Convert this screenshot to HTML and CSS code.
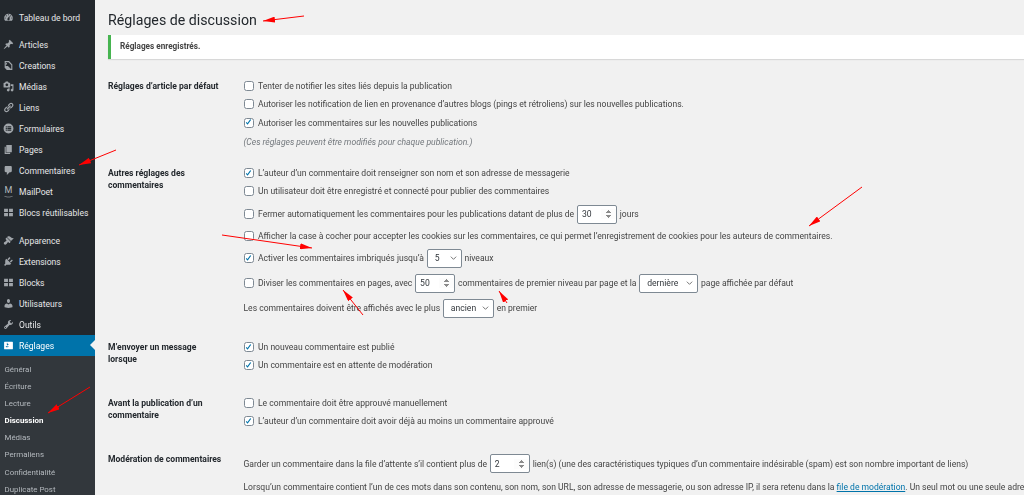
FILE: index.html
```html
<!doctype html>
<html lang="fr">
	<head>
		<title>Réglages de discussion</title>
		<meta charset="UTF-8">
		<link rel="stylesheet" href="styles.css">
	</head>

	<body>
		<svg class="defs" width="0" height="0">
			<defs>
				<symbol id="check" viewBox="0 0 20 20"><path d="M4 10.5l4 4.5 8-11-2.2-1.3-6 8.4-2.3-2.3z"/></symbol>
				<marker id="head" viewBox="0 0 12 6" refX="12" refY="3" markerWidth="12" markerHeight="6" markerUnits="userSpaceOnUse" orient="auto">
					<path d="M0 0L12 3L0 6z"/>
				</marker>
			</defs>
		</svg>

		<div class="wrapper">
			<nav class="sidebar">
				<ul class="menu">
					<li class="item"><svg class="icon" viewBox="0 0 20 20"><path d="M3.76 16h12.48c1.1-1.37 1.76-3.11 1.76-5 0-4.42-3.58-8-8-8s-8 3.58-8 8c0 1.89.66 3.63 1.76 5zM10 4c.55 0 1 .45 1 1s-.45 1-1 1-1-.45-1-1 .45-1 1-1zM6 6c.55 0 1 .45 1 1s-.45 1-1 1-1-.45-1-1 .45-1 1-1zm8 0c.55 0 1 .45 1 1s-.45 1-1 1-1-.45-1-1 .45-1 1-1zm-5.37 5.55L12 7v6c0 1.1-.9 2-2 2s-2-.9-2-2c0-.57.24-1.08.63-1.45zM4 10c.55 0 1 .45 1 1s-.45 1-1 1-1-.45-1-1 .45-1 1-1zm12 0c.55 0 1 .45 1 1s-.45 1-1 1-1-.45-1-1 .45-1 1-1z" fill-rule="evenodd"/></svg>Tableau de bord</li>
					<li class="item sep"><svg class="icon" viewBox="0 0 20 20"><path d="M10.44 3.02l1.82-1.82 6.36 6.35-1.83 1.82c-1.05-.68-2.48-.57-3.41.36l-.75.75c-.92.93-1.04 2.35-.35 3.41l-1.83 1.82-2.41-2.41-2.8 2.79c-.42.42-3.38 2.71-3.8 2.29s1.86-3.39 2.28-3.81l2.79-2.79L4.1 9.36l1.83-1.82c1.05.69 2.48.57 3.4-.36l.75-.75c.93-.92 1.05-2.35.36-3.41z"/></svg>Articles</li>
					<li class="item"><svg class="icon" viewBox="0 0 20 20"><path d="M3 2h8l6 6v10H7l-4-4zm2 2v7h4l5 5h1V9l-5-5zm1 1.5a1.5 1.5 0 1 1 0 3 1.5 1.5 0 0 1 0-3z" fill-rule="evenodd"/></svg>Creations</li>
					<li class="item"><svg class="icon" viewBox="0 0 20 20"><path d="M13 11V4c0-.55-.45-1-1-1h-1.67L9 1H5L3.67 3H2c-.55 0-1 .45-1 1v7c0 .55.45 1 1 1h10c.55 0 1-.45 1-1zM7 4.5c1.38 0 2.5 1.12 2.5 2.5S8.38 9.5 7 9.5 4.5 8.38 4.5 7 5.62 4.5 7 4.5zM14 6h5v10.5c0 1.38-1.12 2.5-2.5 2.5S14 17.88 14 16.5s1.12-2.5 2.5-2.5c.17 0 .34.02.5.05V9h-3V6zm-4 8.05V13h2v3.5c0 1.38-1.12 2.5-2.5 2.5S7 17.88 7 16.5 8.12 14 9.5 14c.17 0 .34.02.5.05z"/></svg>Médias</li>
					<li class="item"><svg class="icon" viewBox="0 0 20 20"><path d="M17.74 2.76c1.68 1.69 1.68 4.41 0 6.1l-1.53 1.52c-1.12 1.12-2.7 1.47-4.14 1.09l2.62-2.61.76-.77.76-.76c.84-.84.84-2.2 0-3.04-.84-.85-2.2-.85-3.04 0l-.77.76-3.38 3.38c-.37-1.44-.02-3.02 1.1-4.14l1.52-1.53c1.69-1.68 4.42-1.68 6.1 0zM8.59 13.43l5.34-5.34c.42-.42.42-1.1 0-1.52-.44-.43-1.13-.39-1.53 0l-5.33 5.34c-.42.42-.42 1.1 0 1.52.44.43 1.13.39 1.52 0zm-.76 2.29l4.14-4.15c.38 1.44.03 3.02-1.09 4.14l-1.52 1.53c-1.69 1.68-4.41 1.68-6.1 0-1.68-1.68-1.68-4.42 0-6.1l1.53-1.52c1.12-1.12 2.7-1.47 4.14-1.1l-4.14 4.15c-.85.84-.85 2.2 0 3.05.84.84 2.2.84 3.04 0z"/></svg>Liens</li>
					<li class="item"><svg class="icon" viewBox="0 0 20 20"><path d="M10 1a9 9 0 1 1 0 18 9 9 0 0 1 0-18zM5 6v2h2V6zm3 0v2h7V6zM5 9v2h2V9zm3 0v2h7V9zm-3 3v2h2v-2zm3 0v2h7v-2z" fill-rule="evenodd"/></svg>Formulaires</li>
					<li class="item"><svg class="icon" viewBox="0 0 20 20"><path d="M6 15V2h10v13H6zm-1 1h8v2H3V5h2v11z"/></svg>Pages</li>
					<li class="item"><svg class="icon" viewBox="0 0 20 20"><path d="M5 2h9c1.1 0 2 .9 2 2v7c0 1.1-.9 2-2 2h-2l-5 5v-5H5c-1.1 0-2-.9-2-2V4c0-1.1.9-2 2-2z"/></svg>Commentaires</li>
					<li class="item"><span class="logo-m">M<svg viewBox="0 0 14 3"><path d="M1 .5c3 1.6 9 1.6 12 0-2 2.6-10 2.6-12 0z"/></svg></span>MailPoet</li>
					<li class="item"><svg class="icon" viewBox="0 0 20 20"><path d="M2 3h7v6H2zm9 0h7v6h-7zM2 11h7v6H2zm9 0h7v6h-7z"/></svg>Blocs réutilisables</li>
					<li class="item sep2"><svg class="icon" viewBox="0 0 20 20"><path d="M14.48 11.06L7.41 3.99l1.5-1.5c.5-.56 2.3-.47 3.51.32 1.21.8 1.43 1.28 2.91 2.1 1.18.64 2.45 1.26 4.45.85zm-.71.71L6.7 4.7 4.93 6.47c-.39.39-.39 1.02 0 1.41l1.06 1.06c.39.39.39 1.03 0 1.42-.6.6-1.43 1.11-2.21 1.69-.35.26-.7.53-1.01.84C1.43 13.71.96 15.65 2.15 16.85s3.14.72 4.17-.32c.31-.31.58-.66.84-1.01.58-.78 1.09-1.61 1.69-2.21.39-.39 1.02-.39 1.41 0l1.06 1.06c.39.39 1.02.39 1.41 0z"/></svg>Apparence</li>
					<li class="item"><svg class="icon" viewBox="0 0 20 20"><path d="M13.11 4.36L9.87 7.6 8 5.73l3.24-3.24c.35-.34 1.05-.2 1.56.32.52.51.66 1.21.31 1.55zm-8 1.77l.91-1.12 9.01 9.01-1.19.84c-.71.71-2.63 1.16-3.82 1.16H6.14L4.9 17.26c-.59.59-1.54.59-2.12 0-.59-.58-.59-1.53 0-2.12l1.24-1.24v-3.88c0-1.13.4-3.19 1.09-3.89zm7.26 3.97l3.24-3.24c.34-.35 1.04-.21 1.55.31.52.51.66 1.21.31 1.55l-3.24 3.25z"/></svg>Extensions</li>
					<li class="item"><svg class="icon" viewBox="0 0 20 20"><path d="M2 3h7v6H2zm9 0h7v6h-7zM2 11h7v6H2zm9 0h7v6h-7z"/></svg>Blocks</li>
					<li class="item"><svg class="icon" viewBox="0 0 20 20"><path d="M10 9.25c-2.27 0-2.73-3.44-2.73-3.44C7 4.02 7.82 2 9.97 2c2.16 0 2.98 2.02 2.71 3.81 0 0-.41 3.44-2.68 3.44zm0 2.57L12.72 10c2.39 0 4.52 2.33 4.52 4.53v2.49s-3.65 1.13-7.24 1.13c-3.65 0-7.24-1.13-7.24-1.13v-2.49c0-2.25 1.94-4.48 4.47-4.48z"/></svg>Utilisateurs</li>
					<li class="item"><svg class="icon" viewBox="0 0 20 20"><path d="M16.68 9.77c-1.34 1.34-3.3 1.67-4.95.99l-5.41 6.52c-.99.99-2.59.99-3.58 0s-.99-2.59 0-3.57l6.52-5.42c-.68-1.65-.35-3.61.99-4.95 1.28-1.28 3.12-1.62 4.72-1.06l-2.89 2.89 2.82 2.82 2.86-2.87c.53 1.58.18 3.39-1.08 4.65zM3.81 16.21c.4.39 1.04.39 1.43 0 .4-.4.4-1.04 0-1.43-.39-.4-1.03-.4-1.43 0-.39.39-.39 1.03 0 1.43z"/></svg>Outils</li>
					<li class="item active"><svg class="icon" viewBox="0 0 20 20"><path d="M18 16V4c0-.55-.45-1-1-1H3c-.55 0-1 .45-1 1v12c0 .55.45 1 1 1h14c.55 0 1-.45 1-1zM8 11h1c.55 0 1 .45 1 1s-.45 1-1 1H8v1.5c0 .28-.22.5-.5.5s-.5-.22-.5-.5V13H6c-.55 0-1-.45-1-1s.45-1 1-1h1V5.5c0-.28.22-.5.5-.5s.5.22.5.5V7h1c.55 0 1 .45 1 1s-.45 1-1 1h-1v5.5c0 .28-.22.5-.5.5s-.5-.22-.5-.5V9z" fill-rule="evenodd"/></svg>Réglages</li>
				</ul>
				<ul class="submenu">
					<li>Général</li>
					<li>Écriture</li>
					<li>Lecture</li>
					<li class="current">Discussion</li>
					<li>Médias</li>
					<li>Permaliens</li>
					<li>Confidentialité</li>
					<li>Duplicate Post</li>
				</ul>
			</nav>

			<main class="content">
				<h1>Réglages de discussion</h1>
				<div class="notice">Réglages enregistrés.</div>

				<section class="row row-first">
					<h2>Réglages d’article par défaut</h2>
					<div class="fields">
						<label class="line"><span class="box"></span>Tenter de notifier les sites liés depuis la publication</label>
						<label class="line"><span class="box"></span>Autoriser les notification de lien en provenance d’autres blogs (pings et rétroliens) sur les nouvelles publications.</label>
						<label class="line"><span class="box"><svg viewBox="0 0 20 20"><use href="#check"/></svg></span>Autoriser les commentaires sur les nouvelles publications</label>
						<p class="line note">(Ces réglages peuvent être modifiés pour chaque publication.)</p>
					</div>
				</section>

				<section class="row row-others">
					<h2>Autres réglages des commentaires</h2>
					<div class="fields">
						<label class="line"><span class="box"><svg viewBox="0 0 20 20"><use href="#check"/></svg></span>L’auteur d’un commentaire doit renseigner son nom et son adresse de messagerie</label>
						<label class="line"><span class="box"></span>Un utilisateur doit être enregistré et connecté pour publier des commentaires</label>
						<label class="line gap5"><span class="box"></span>Fermer automatiquement les commentaires pour les publications datant de plus de <input class="num" type="number" value="30"> jours</label>
						<label class="line gap4"><span class="box"></span>Afficher la case à cocher pour accepter les cookies sur les commentaires, ce qui permet l’enregistrement de cookies pour les auteurs de commentaires.</label>
						<label class="line gap4"><span class="box"><svg viewBox="0 0 20 20"><use href="#check"/></svg></span>Activer les commentaires imbriqués jusqu’à <select class="sel sel-small"><option>5</option></select> niveaux</label>
						<label class="line gap7"><span class="box"></span>Diviser les commentaires en pages, avec <input class="num" type="number" value="50"> commentaires de premier niveau par page et la <select class="sel sel-wide"><option>dernière</option></select> page affichée par défaut</label>
						<label class="line gap7">Les commentaires doivent être affichés avec le plus <select class="sel sel-mid"><option>ancien</option></select> en premier</label>
					</div>
				</section>

				<section class="row row-mail">
					<h2>M’envoyer un message lorsque</h2>
					<div class="fields">
						<label class="line"><span class="box"><svg viewBox="0 0 20 20"><use href="#check"/></svg></span>Un nouveau commentaire est publié</label>
						<label class="line"><span class="box"><svg viewBox="0 0 20 20"><use href="#check"/></svg></span>Un commentaire est en attente de modération</label>
					</div>
				</section>

				<section class="row row-before">
					<h2>Avant la publication d’un commentaire</h2>
					<div class="fields">
						<label class="line"><span class="box"></span>Le commentaire doit être approuvé manuellement</label>
						<label class="line"><span class="box"><svg viewBox="0 0 20 20"><use href="#check"/></svg></span>L’auteur d’un commentaire doit avoir déjà au moins un commentaire approuvé</label>
					</div>
				</section>

				<section class="row row-moderation">
					<h2>Modération de commentaires</h2>
					<div class="fields">
						<label class="line">Garder un commentaire dans la file d’attente s’il contient plus de <input class="num" type="number" value="2"> lien(s) (une des caractéristiques typiques d’un commentaire indésirable (spam) est son nombre important de liens)</label>
						<p class="line gap5"><span>Lorsqu’un commentaire contient l’un de ces mots dans son contenu, son nom, son URL, son adresse de messagerie, ou son adresse IP, il sera retenu dans la <a href="#">file de modération</a>. Un seul mot ou une seule adre</span></p>
					</div>
				</section>
			</main>
		</div>

		<!-- les fleches rouges dessinees sur la capture -->
		<svg class="arrows" viewBox="0 0 1024 495">
			<line x1="304" y1="16" x2="263" y2="21" marker-end="url(#head)"/>
			<line x1="116" y1="150" x2="79" y2="165" marker-end="url(#head)"/>
			<line x1="90" y1="387" x2="48" y2="413" marker-end="url(#head)"/>
			<line x1="862" y1="187" x2="809" y2="226" marker-end="url(#head)"/>
			<line x1="222" y1="235" x2="312" y2="248" marker-end="url(#head)"/>
			<line x1="363" y1="315" x2="343" y2="290" marker-end="url(#head)"/>
			<line x1="507" y1="303" x2="499" y2="291" marker-end="url(#head)"/>
		</svg>
	</body>
</html>
```

FILE: styles.css
```css
* {
	padding: 0;
	margin: 0;
	box-sizing: border-box;
}

html, body {
	height: 495px;
	overflow: hidden;
}

body {
	position: relative;
	background: #f1f1f1;
	color: #444;
	font-family: Roboto, "Liberation Sans", sans-serif;
	font-size: 8.57px;
}

ul {
	list-style: none;
}

.defs {
	position: absolute;
}

/* the reference is a soft, rescaled capture */
.wrapper {
	display: flex;
	height: 495px;
	filter: blur(0.3px);
}

/* sidebar */

.sidebar {
	width: 95px;
	flex: none;
	background: #23282d;
	color: #e6e7e8;
	padding-top: 7px;
}

.item {
	display: flex;
	align-items: center;
	gap: 5px;
	height: 21px;
	padding-left: 3px;
	white-space: nowrap;
}

.item.sep {
	margin-top: 6px;
}

.item.sep2 {
	margin-top: 7px;
}

.icon {
	width: 11px;
	height: 11px;
	flex: none;
	fill: #a0a5aa;
}

.logo-m {
	display: flex;
	flex-direction: column;
	align-items: center;
	width: 11px;
	flex: none;
	color: #b4b9be;
	font-size: 9px;
	line-height: 9px;
}

.logo-m svg {
	width: 11px;
	height: 3px;
	fill: #b4b9be;
}

.item.active {
	position: relative;
	background: #0073aa;
	color: #fff;
}

.item.active .icon {
	fill: #fff;
}

.item.active::after {
	content: "";
	position: absolute;
	right: 0;
	top: 5px;
	border: 5px solid transparent;
	border-right-color: #f1f1f1;
	border-left-width: 0;
}

.submenu {
	background: #32373c;
	color: #b4b9be;
	font-size: 7.9px;
	padding-top: 4.5px;
	height: 140px;
}

.submenu li {
	height: 17.2px;
	line-height: 17.2px;
	padding-left: 4.5px;
}

.submenu .current {
	color: #fff;
	font-weight: 700;
}

/* content */

.content {
	flex: 1;
	min-width: 0;
	padding-left: 13px;
}

h1 {
	color: #23282d;
	font-size: 14.2px;
	font-weight: 400;
	line-height: 20px;
	padding-top: 10px;
	box-sizing: content-box;
}

.notice {
	height: 24px;
	margin-top: 5px;
	line-height: 23px;
	padding-left: 9px;
	background: #fff;
	border-left: 3px solid #46b450;
	box-shadow: 0 1px 1px rgba(0, 0, 0, 0.1);
	font-size: 8.2px;
	font-weight: 700;
}

.row {
	display: grid;
	grid-template-columns: 135.5px 1fr;
}

.row-first {
	margin-top: 18px;
}

.row-others {
	margin-top: 13.1px;
}

.row-mail {
	margin-top: 20.5px;
}

.row-before {
	margin-top: 19.1px;
}

.row-moderation {
	margin-top: 19.5px;
}

.row-moderation .fields {
	padding-top: 5px;
}

h2 {
	color: #23282d;
	font-size: 8.57px;
	font-weight: 700;
	line-height: 12px;
	padding-top: 3px;
	padding-right: 17px;
}

.fields {
	min-width: 0;
}

.line {
	display: flex;
	align-items: center;
	gap: 2.8px;
	height: 18.3px;
	white-space: nowrap;
}

.note {
	height: 19px;
	padding-top: 1px;
	color: #72777c;
	font-style: italic;
}

.gap4 {
	margin-top: 3.7px;
}

.gap5 {
	margin-top: 4.7px;
}

.gap7 {
	margin-top: 6.7px;
}

.box {
	display: flex;
	align-items: center;
	justify-content: center;
	width: 10px;
	height: 10px;
	flex: none;
	background: #fff;
	border: 1px solid #7e8993;
	border-radius: 2.5px;
	margin-right: 1.7px;
}

.box svg {
	width: 9px;
	height: 9px;
	flex: none;
	fill: #0073aa;
}

.num, .sel {
	height: 19px;
	flex: none;
	background-color: #fff;
	border: 1px solid #7e8993;
	border-radius: 2px;
	color: #32373c;
	font-family: inherit;
	font-size: 8.6px;
}

.num {
	width: 40px;
	padding-left: 4px;
}

.num::-webkit-inner-spin-button {
	opacity: 1;
	width: 7px;
}

.sel {
	appearance: none;
	padding-left: 7px;
	background-image: url("data:image/svg+xml,%3Csvg xmlns='http://www.w3.org/2000/svg' viewBox='0 0 10 6'%3E%3Cpath d='M1 1l4 4 4-4' fill='none' stroke='%23555' stroke-width='1.2'/%3E%3C/svg%3E");
	background-repeat: no-repeat;
	background-position: right 4px center;
	background-size: 7px 4px;
}

.sel-small {
	width: 35px;
}

.sel-mid {
	width: 51px;
}

.sel-wide {
	width: 59px;
}

a {
	color: #0073aa;
}

/* arrows */

.arrows {
	position: absolute;
	left: 0;
	top: 0;
	width: 1024px;
	height: 495px;
	stroke: #f00;
	stroke-width: 1;
	pointer-events: none;
}

#head path {
	fill: #f00;
	stroke: none;
}
```
